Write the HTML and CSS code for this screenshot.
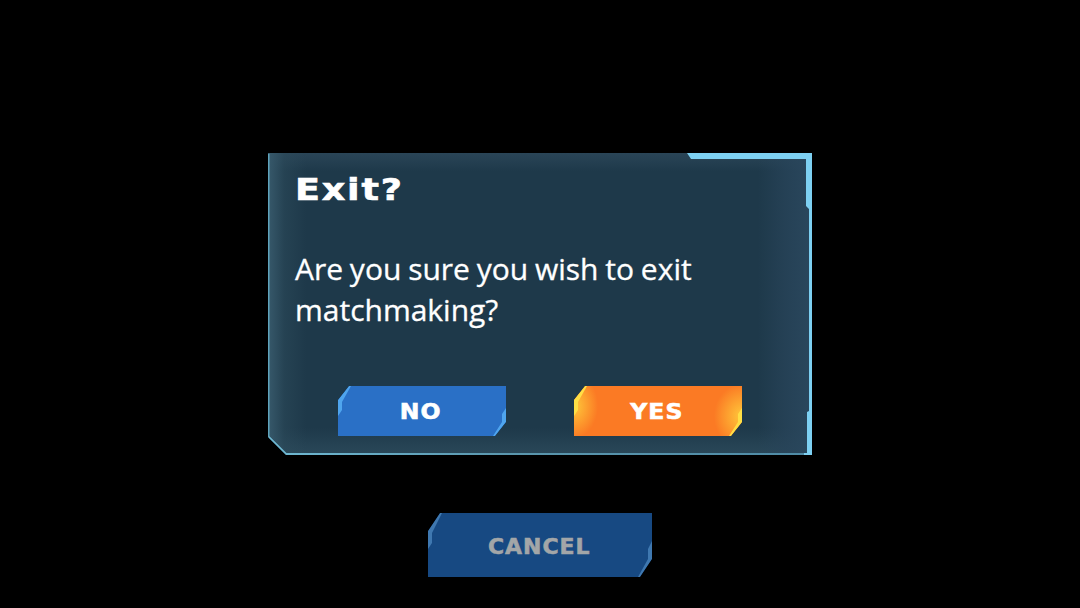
FILE: index.html
```html
<!DOCTYPE html>
<html lang="en">
<head>
<meta charset="utf-8">
<title>Exit?</title>
<link rel="stylesheet" href="styles.css">
</head>
<body>
<main class="screen">
  <section class="dialog">
    <svg class="frame" width="544" height="302" viewBox="0 0 544 302" aria-hidden="true">
      <defs>
        <linearGradient id="fade-bottom" x1="0" x2="1" y1="0" y2="0">
          <stop offset="0" stop-color="#6fb9d3"/>
          <stop offset=".45" stop-color="#5a96ad"/>
          <stop offset="1" stop-color="#4f8ba6"/>
        </linearGradient>
        <linearGradient id="fade-top" x1="0" x2="1" y1="0" y2="0">
          <stop offset="0" stop-color="#5b9db5"/>
          <stop offset="1" stop-color="#477a92"/>
        </linearGradient>
      </defs>
      <path class="frame-left" d="M.75 284V.75"/>
      <path class="frame-top" d="M0 .9H420" stroke="url(#fade-top)"/>
      <path class="frame-bottom" d="M.75 284 18 300.900H540" stroke="url(#fade-bottom)"/>
      <path class="frame-right" d="M542.500 56V260"/>
      <path class="frame-accent" d="M419 0H544V302H536V300H539V259L541 258V56L538 53V6H423Z"/>
    </svg>
    <h1 class="title">Exit?</h1>
    <p class="message">Are you sure you wish to exit matchmaking?</p>
    <div class="actions">
      <button class="btn btn-no"><span>NO</span></button>
      <button class="btn btn-yes"><span>YES</span></button>
    </div>
  </section>
  <button class="btn btn-cancel"><span>CANCEL</span></button>
</main>
</body>
</html>
```
FILE: styles.css
```css
* { box-sizing: border-box; }
html, body { margin: 0; height: 100%; background: #000; }
.screen {
  width: 1080px;
  height: 608px;
  overflow: hidden;
  padding-top: 153px;
  display: flex;
  flex-direction: column;
  align-items: center;
  gap: 58px;
}
.dialog {
  position: relative;
  width: 544px;
  height: 302px;
  padding: 16px 28px 0;
  background:
    linear-gradient(90deg, #37596b 0, rgba(45, 76, 92, .5) 3%, rgba(30, 57, 74, 0) 7%),
    linear-gradient(270deg, #2a475d 0, rgba(40, 68, 90, .7) 5%, rgba(30, 57, 74, 0) 10%),
    linear-gradient(0deg, #2a4859 0, rgba(42, 72, 89, 0) 9%),
    linear-gradient(180deg, #2a4557 0, rgba(42, 69, 87, 0) 6%),
    #1e394a;
  clip-path: polygon(0 0, 100% 0, 100% 100%, 18px 100%, 0 284px);
}
.frame { position: absolute; inset: 0; }
.frame-left, .frame-top, .frame-bottom, .frame-right { fill: none; stroke-width: 1.5; }
.frame-left { stroke: #5fa3bb; }
.frame-bottom { stroke-width: 2; }
.frame-right { stroke: #79bcd4; stroke-width: 3; }
.frame-accent { fill: #7dd0f2; }
.title {
  margin: 0 0 0 -1px;
  font: 700 31px/40px "DejaVu Sans", sans-serif;
  letter-spacing: 1.5px;
  color: #fff;
  -webkit-text-stroke: .6px #fff;
  transform: scaleX(1.18);
  transform-origin: left center;
}
.message {
  margin: 39px 0 0 -1px;
  width: 420px;
  font: 400 30px/41px "Open Sans", sans-serif;
  word-spacing: -1px;
  color: #fff;
  -webkit-text-stroke: .3px #fff;
}
.actions {
  display: flex;
  justify-content: center;
  gap: 68px;
  margin: 56px 0 0;
}
.btn {
  position: relative;
  display: flex;
  align-items: center;
  justify-content: center;
  border: 0;
  padding: 2px 0 0;
  width: 168px;
  height: 50px;
  font: 700 21px/1 "DejaVu Sans", sans-serif;
  letter-spacing: 1px;
  color: #fff;
  -webkit-text-stroke: .6px currentColor;
  clip-path: polygon(11px 0, 100% 0, 100% 36px, 157px 100%, 0 100%, 0 14px);
}
.btn span { position: relative; transform: scaleX(1.12); margin-left: -2px; }
.btn::before, .btn::after {
  content: "";
  position: absolute;
  inset: 0;
  background: var(--strip);
}
.btn::before { clip-path: polygon(11px 0, 13px 0, 4px 16px, 4px 24px, 0 30px, 0 14px); }
.btn::after { clip-path: polygon(168px 22px, 168px 36px, 157px 50px, 155px 50px, 164px 36px, 164px 28px); }
.btn-no { background: #2a70c6; --strip: #4fa5ee; }
.btn-yes {
  background:
    radial-gradient(ellipse 24px 32px at 0 20px, rgba(255, 205, 60, .95) 0, rgba(251, 122, 36, 0) 100%),
    radial-gradient(ellipse 28px 32px at 100% 30px, rgba(255, 205, 60, .95) 0, rgba(251, 122, 36, 0) 100%),
    #fb7a24;
  --strip: #ffdf45;
}
.btn-cancel {
  width: 224px;
  height: 64px;
  padding: 4px 0 0;
  background: #174982;
  --strip: #3f78b0;
  color: #a3a6a8;
  font-size: 21.500px;
  clip-path: polygon(12px 0, 100% 0, 100% 46px, 212px 100%, 0 100%, 0 18px);
}
.btn-cancel span { transform: scaleX(1.02); margin-left: -2px; }
.btn-cancel::before { clip-path: polygon(12px 0, 14px 0, 4px 20px, 4px 30px, 0 36px, 0 18px); }
.btn-cancel::after { clip-path: polygon(224px 28px, 224px 46px, 212px 64px, 210px 64px, 220px 46px, 220px 36px); }
```
